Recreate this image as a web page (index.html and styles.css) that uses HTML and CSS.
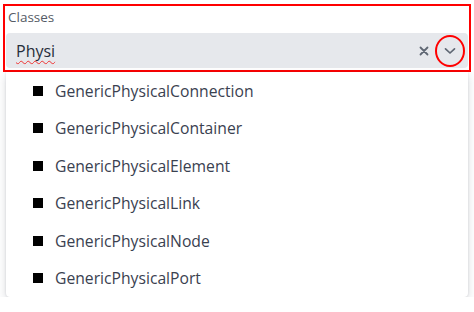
FILE: index.html
```html
<!DOCTYPE html>
<html lang="en">
<head>
    <meta charset="UTF-8">
    <title>Classes</title>
    <link rel="stylesheet" href="styles.css">
</head>
<body>
    <div class="field">
        <label class="field-label">Classes</label>
        <div class="select">
            <span class="select-value">Physi</span>
            <span class="select-clear">
                <svg width="10" height="10" viewBox="0 0 10 10"><path d="M1.5 1.5 L8.5 8.5 M8.5 1.5 L1.5 8.5" fill="none" stroke="#5f6773" stroke-width="1.8" stroke-linecap="round"/></svg>
            </span>
            <span class="select-toggle">
                <svg width="12" height="8" viewBox="0 0 12 8"><path d="M1.5 1.8 L6 6 L10.5 1.8" fill="none" stroke="#5f6773" stroke-width="1.7" stroke-linecap="round" stroke-linejoin="round"/></svg>
            </span>
        </div>
    </div>
    <ul class="menu">
        <li class="menu-item"><span class="bullet"></span>GenericPhysicalConnection</li>
        <li class="menu-item"><span class="bullet"></span>GenericPhysicalContainer</li>
        <li class="menu-item"><span class="bullet"></span>GenericPhysicalElement</li>
        <li class="menu-item"><span class="bullet"></span>GenericPhysicalLink</li>
        <li class="menu-item"><span class="bullet"></span>GenericPhysicalNode</li>
        <li class="menu-item"><span class="bullet"></span>GenericPhysicalPort</li>
    </ul>
</body>
</html>
```

FILE: styles.css
```css
body {
    margin: 0;
    padding: 4px 3px 0;
    background: #fff;
    font-family: "Open Sans", "Noto Sans", sans-serif;
    color: #3a4150;
}
/* 输入框外的红框 */
.field {
    border: 2px solid #f00;
    height: 64px;
    display: flex;
    flex-direction: column;
}
.field-label {
    font-size: 13.5px;
    color: #555b66;
    padding: 3px 0 0 3px;
    line-height: 17px;
    height: 22px;
}
.select {
    margin: 2px 1px 0;
    height: 35px;
    background: #e6e8ec;
    border-radius: 4px;
    display: flex;
    align-items: center;
}
.select-value {
    flex: 1;
    padding-left: 10px;
    font-size: 16px;
    color: #262d3a;
    text-decoration: underline wavy #e33;
    text-decoration-thickness: 1px;
    text-underline-offset: 3px;
    text-decoration-skip-ink: none;
}
.select-clear {
    display: flex;
    margin-right: 6px;
}
.select-toggle {
    width: 26px;
    height: 28px;
    border: 2px solid #f00;
    border-radius: 50%;
    display: flex;
    align-items: center;
    justify-content: center;
    margin-right: 3px;
}
/* 下拉菜单 */
.menu {
    list-style: none;
    margin: 0 3px;
    padding: 0;
    background: #fff;
    border-radius: 0 0 4px 4px;
    box-shadow: 0 4px 10px rgba(40, 50, 70, 0.18), 0 0 2px rgba(40, 50, 70, 0.15);
}
.menu-item {
    height: 37.5px;
    display: flex;
    align-items: center;
    padding-left: 27px;
    font-size: 15.7px;
    color: #3a4150;
}
.bullet {
    width: 10px;
    height: 10px;
    background: #000;
    margin-right: 12px;
}
```
